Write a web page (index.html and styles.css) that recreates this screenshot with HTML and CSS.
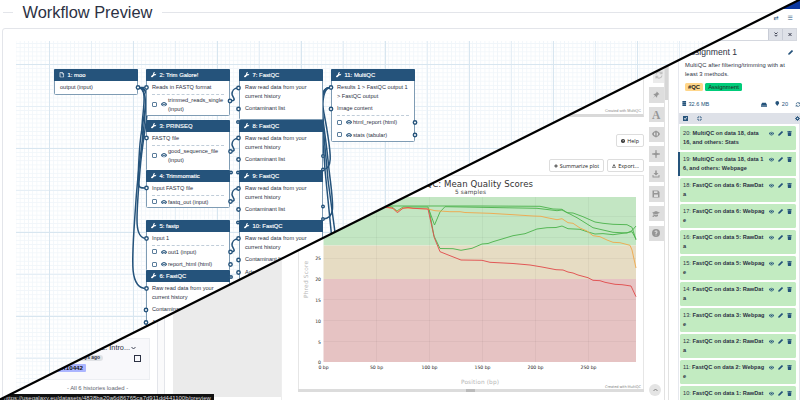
FILE: index.html
```html
<!DOCTYPE html>
<html lang="en">
<head>
    <meta charset="UTF-8">
    <meta name="viewport" content="width=device-width, initial-scale=1.0">
    <title>Workflow Preview</title>
    <link rel="stylesheet" href="styles.css">
</head>
<body>
    <!-- Icon set -->
    <svg class="icon-defs" width="0" height="0">
        <symbol id="wrench" viewBox="0 0 16 16"><path d="M15.5 4.2 12.8 6.6 10 6 9.4 3.2 11.9.5A4.6 4.6 0 0 0 6.3 6.2L.8 11.7a2 2 0 0 0 0 2.9l.6.6a2 2 0 0 0 2.9 0L9.8 9.7A4.6 4.6 0 0 0 15.5 4.2z"/></symbol>
        <symbol id="file" viewBox="0 0 16 16"><path d="M3 1h6.5L13.5 5v10H3zM9 1v4.5h4.5" fill="none" stroke="currentColor" stroke-width="2"/></symbol>
        <symbol id="eye" viewBox="0 0 16 12"><path fill-rule="evenodd" d="M8 0C4.5 0 1.5 2.5 0 6c1.5 3.5 4.5 6 8 6s6.5-2.5 8-6c-1.5-3.5-4.5-6-8-6zm0 2a4 4 0 1 1 0 8 4 4 0 0 1 0-8z"/><circle cx="8" cy="6" r="2.3"/></symbol>
        <symbol id="pen" viewBox="0 0 16 16"><path d="M11.5.8a1.5 1.5 0 0 1 2.1 0l1.6 1.6a1.5 1.5 0 0 1 0 2.1L5.5 14.2.5 15.5l1.3-5z"/></symbol>
        <symbol id="trash" viewBox="0 0 14 16"><path d="M0 1h4l1-1h4l1 1h4v2H0zM1 4h12l-1 12H2z"/></symbol>
        <symbol id="database" viewBox="0 0 14 16"><path d="M1 0h12v4H1zM1 5h12v5H1zM1 11h12v5H1z"/></symbol>
        <symbol id="pin" viewBox="0 0 16 16"><path d="M9.5 1 15 6.5 13 7l-2.5 2.5-.5 4L6.5 10 1 15l5-5.5L2.5 6l4-.5L9 3z"/></symbol>
        <symbol id="hide" viewBox="0 0 16 16"><path fill-rule="evenodd" d="M8 2C4 2 1 5 0 8c1 3 4 6 8 6s7-3 8-6c-1-3-4-6-8-6zM4 5.5 7 5v6.5L4 10zM9 4.5l3 1.5v4.5L9 12z"/><path d="M7.2 1h1.6v14H7.2z"/></symbol>
        <symbol id="plus" viewBox="0 0 16 16"><path d="M7 0h2l.5 6L16 7v2l-6.5.8L9 16H7l-.5-6.2L0 9V7l6.5-1z"/></symbol>
        <symbol id="download" viewBox="0 0 16 16"><path d="M6.5 1h3v5H13l-5 5-5-5h3.5zM1 10h2v3h10v-3h2v5H1z"/></symbol>
        <symbol id="save" viewBox="0 0 16 16"><path fill-rule="evenodd" d="M1 1h11l3 3v11H1zM4 2.5V6h7V2.5zM4 9v5h8V9z"/></symbol>
        <symbol id="cap" viewBox="0 0 16 16"><path d="M8 2l8 3.5L8 9 3 6.8V10l1 4H1l1-4V6.3L0 5.5zM4 8.5l4 1.8 4-1.8V12c-2 2-6 2-8 0z"/></symbol>
        <symbol id="help" viewBox="0 0 16 16"><path fill-rule="evenodd" d="M8 0a8 8 0 1 0 0 16A8 8 0 0 0 8 0zM5 6a3 3 0 1 1 4.2 2.8V10H7V7.5c1 0 2-.5 2-1.5 0-1.3-2-1.3-2 0zm2 5h2v2H7z"/></symbol>
        <symbol id="refresh" viewBox="0 0 16 16"><path d="M2 7a6 6 0 0 1 11-2.5M14 9a6 6 0 0 1-11 2.5M14 1v4.5H9.5M2 15v-4.5h4.5" fill="none" stroke="currentColor" stroke-width="2.2"/></symbol>
        <symbol id="gear" viewBox="0 0 16 16"><circle cx="8" cy="8" r="4.2" fill="none" stroke="currentColor" stroke-width="3.5"/><path d="M8 0v3M8 13v3M0 8h3M13 8h3M2.5 2.5l2 2M11.5 11.5l2 2M13.5 2.5l-2 2M4.5 11.5l-2 2" stroke="currentColor" stroke-width="2.5"/></symbol>
    </svg>

    <main class="stage">
        <!-- Galaxy window -->
        <div class="galaxy">
            <aside class="histories">
                <div class="history-card">
                    <div class="card-title">Assignment 2: Intro...<svg class="chevron" viewBox="0 0 10 6"><path d="M1 1l4 4 4-4"/></svg></div>
                    <div class="card-row"><span class="ago">6 days ago</span><span class="pick"></span></div>
                    <span class="purple-tag">SRR10442</span>
                </div>
                <p class="loaded">- All 6 histories loaded -</p>
            </aside>
            <div class="gutter"></div>

            <section class="report">
                <div class="prev-plot"><span>Created with MultiQC</span></div>
                <div class="report-buttons"><span class="btn"><svg><use href="#help"/></svg>Help</span></div>
                <div class="report-buttons second">
                    <span class="btn"><svg><use href="#plus"/></svg>Summarize plot</span>
                    <span class="btn export"><svg><use href="#download"/></svg>Export...</span>
                </div>
                <div class="plot">
                    <svg width="344" height="213" viewBox="299 176 344 213">
                        <text class="plot-title" x="408" y="186.5" textLength="125">FastQC: Mean Quality Scores</text>
                        <text class="plot-sub" x="455" y="194.3" textLength="31">5 samples</text>
                        <rect x="323.5" y="197" width="312.5" height="48.5" fill="#c3e6c3"/>
                        <rect x="323.5" y="245.5" width="312.5" height="33.5" fill="#e6dcc3"/>
                        <rect x="323.5" y="279" width="312.5" height="83" fill="#e6c3c3"/>
                        <path class="plot-grid" d="M376.5 197v165M429.5 197v165M482.5 197v165M535.5 197v165M588.5 197v165M323.5 216.5h312.5M323.5 237.5h312.5M323.5 258.5h312.5M323.5 299.5h312.5M323.5 320.5h312.5M323.5 341.5h312.5"/>
                        <g class="axis-y">
                            <text x="321" y="260">25</text><text x="321" y="281">20</text><text x="321" y="301.5">15</text>
                            <text x="321" y="322.5">10</text><text x="321" y="343.5">5</text><text x="321" y="364">0</text>
                        </g>
                        <g class="axis-x">
                            <text x="323.5" y="369">0 bp</text><text x="376.5" y="369">50 bp</text><text x="429.5" y="369">100 bp</text>
                            <text x="482.5" y="369">150 bp</text><text x="535.5" y="369">200 bp</text><text x="588.5" y="369">250 bp</text>
                        </g>
                        <text class="axis-title" transform="translate(307.5 298) rotate(-90)" textLength="37">Phred Score</text>
                        <text class="axis-title" x="461" y="384" textLength="38">Position (bp)</text>
                        <text class="credit" x="605" y="387.8" textLength="36">Created with MultiQC</text>
                        <g class="curves">
                            <path class="good" d="M370 206.5 392 207 397 211 403 207 428 207 434.5 225 440 212 445 206.7 480 207.3 537 208.3 557 210.7 562 210 568 213 577 217.7 593 227.7 603 230 613 232.3 627 233 632 230.7 636 226"/>
                            <path class="good" d="M370 206 420 206 480 206 540 206.3 553 209 562 209.3 567 212.7 573 213 583 216.7 595 222 603 223.3 613 224.3 627 224.7 632 227.3 636 240"/>
                            <path class="good" d="M429 209 434 236 440 248.5 453 248.7 461 250.3 472 248.3 482 244 488 243.5 493 241.7 513 235.7 525 233.7 537 229 547 227.7 556 227.5 562 226 568 228.7 580 229.3 587 231.7 595 234 603 233.6 613 234.7 627 232.7 632 231.7 636 239"/>
                            <path class="warn" d="M370 206.5 392 208 397 211.5 403 208 428 209 435 210.7 450 211.7 460 211.7 465 212.5 490 213.3 513 214.7 533 216 541 216.3 547 217.7 557 219.7 562 218.7 568 222.7 573 223.3 580 228 587 231 593 235.7 600 236.7 607 240 613 242.3 620 242.7 630 245.3 632 250 636 268"/>
                            <path class="bad" d="M370 206 387 207.3 393 208.3 397.3 212.7 403 208.3 408 207.5 413 208.3 428 209 434.3 237.7 440 251.7 450 255.7 461 260 482 260.3 490 262.3 513 263.5 530 265 542 267 556 269.7 563 270 568 272 573 273 578 275 588 277.7 593 280.3 600 280.7 605 282.3 615 284.3 622 284.7 631 286 636 296.7"/>
                        </g>
                    </svg>
                </div>
                <div class="hscroll"><i></i></div>
            </section>

            <nav class="plot-tools">
                <span class="tool faded"><svg><use href="#refresh"/></svg></span>
                <span class="tool"><svg><use href="#pin"/></svg></span>
                <span class="tool letter">A</span>
                <span class="tool"><svg><use href="#hide"/></svg></span>
                <span class="tool"><svg><use href="#plus"/></svg></span>
                <span class="tool"><svg><use href="#download"/></svg></span>
                <span class="tool"><svg><use href="#save"/></svg></span>
                <span class="tool"><svg><use href="#cap"/></svg></span>
                <span class="tool"><svg><use href="#help"/></svg></span>
                <span class="to-top"><svg class="chevron" viewBox="0 0 10 6"><path d="M1 5l4-4 4 4"/></svg></span>
            </nav>
            <div class="vscroll"><i></i></div>

            <aside class="history">
                <div class="masthead"></div>
                <div class="history-top"><span>&#8644;</span><span>&#9776;</span></div>
                <div class="history-search">
                    <span><svg viewBox="0 0 8 10"><path d="M1 1l3 3 3-3M1 5.5l3 3 3-3"/></svg></span>
                    <span><svg viewBox="0 0 8 10"><path d="M1 2l6 6M7 2L1 8"/></svg></span>
                </div>
                <div class="history-info">
                    <div class="history-name"><h2>Assignment 1</h2><svg><use href="#pen"/></svg></div>
                    <p>MultiQC after filtering/trimming with at<br>least 3 methods.</p>
                    <div class="tags"><span class="tag-qc">#QC</span><span class="tag-assign">Assignment</span></div>
                    <div class="stats">
                        <span class="size"><svg><use href="#database"/></svg>32.6 MB</span>
                        <svg class="disk" viewBox="0 0 16 12"><path d="M3 1h10l3 6H0zM0 8h16v4H0z"/></svg>
                        <span class="count"><svg viewBox="0 0 12 16"><path d="M6 0a6 6 0 0 1 6 6c0 3-3 5-6 10C3 11 0 9 0 6a6 6 0 0 1 6-6z"/></svg>20</span>
                        <svg class="sync"><use href="#refresh"/></svg>
                    </div>
                </div>
                <div class="select-bar">
                    <svg viewBox="0 0 12 12"><path fill-rule="evenodd" d="M0 0h12v12H0zM2 6l3 3.5 5-6-1.5-1L5 6.5 3.5 5z"/></svg>
                    <svg viewBox="0 0 12 12"><path d="M4 0v4H0M8 0v4h4M4 12V8H0M8 12V8h4" fill="none" stroke="currentColor" stroke-width="1.5"/></svg>
                    <svg class="settings"><use href="#gear"/></svg>
                </div>
                <div class="datasets">
                    <div class="dataset"><p><span>20:</span> MultiQC on data 18, data<br>16, and others: Stats</p><div class="acts"><svg><use href="#eye"/></svg><svg><use href="#pen"/></svg><svg><use href="#trash"/></svg></div></div>
                    <div class="dataset active"><p><span>19:</span> MultiQC on data 18, data 1<br>6, and others: Webpage</p><div class="acts"><svg><use href="#eye"/></svg><svg><use href="#pen"/></svg><svg><use href="#trash"/></svg></div></div>
                    <div class="dataset"><p><span>18:</span> FastQC on data 6: RawDat<br>a</p><div class="acts"><svg><use href="#eye"/></svg><svg><use href="#pen"/></svg><svg><use href="#trash"/></svg></div></div>
                    <div class="dataset"><p><span>17:</span> FastQC on data 6: Webpag<br>e</p><div class="acts"><svg><use href="#eye"/></svg><svg><use href="#pen"/></svg><svg><use href="#trash"/></svg></div></div>
                    <div class="dataset"><p><span>16:</span> FastQC on data 5: RawDat<br>a</p><div class="acts"><svg><use href="#eye"/></svg><svg><use href="#pen"/></svg><svg><use href="#trash"/></svg></div></div>
                    <div class="dataset"><p><span>15:</span> FastQC on data 5: Webpag<br>e</p><div class="acts"><svg><use href="#eye"/></svg><svg><use href="#pen"/></svg><svg><use href="#trash"/></svg></div></div>
                    <div class="dataset"><p><span>14:</span> FastQC on data 3: RawDat<br>a</p><div class="acts"><svg><use href="#eye"/></svg><svg><use href="#pen"/></svg><svg><use href="#trash"/></svg></div></div>
                    <div class="dataset"><p><span>13:</span> FastQC on data 3: Webpag<br>e</p><div class="acts"><svg><use href="#eye"/></svg><svg><use href="#pen"/></svg><svg><use href="#trash"/></svg></div></div>
                    <div class="dataset"><p><span>12:</span> FastQC on data 2: RawDat<br>a</p><div class="acts"><svg><use href="#eye"/></svg><svg><use href="#pen"/></svg><svg><use href="#trash"/></svg></div></div>
                    <div class="dataset"><p><span>11:</span> FastQC on data 2: Webpag<br>e</p><div class="acts"><svg><use href="#eye"/></svg><svg><use href="#pen"/></svg><svg><use href="#trash"/></svg></div></div>
                    <div class="dataset"><p><span>10:</span> FastQC on data 1: RawDat</p><div class="acts"><svg><use href="#eye"/></svg><svg><use href="#pen"/></svg><svg><use href="#trash"/></svg></div></div>
                </div>
            </aside>
            <div class="status-url">https://usegalaxy.eu/datasets/4838ba20a6d86765ca7d911dd441100b/preview</div>
        </div>

        <!-- Workflow window, cut along the diagonal -->
        <section class="workflow">
            <h1>Workflow Preview</h1>
            <div class="canvas-card">
                <div class="canvas">
                    <svg class="wires" viewBox="0 0 800 400">
                        <path d="M138 87.5h8.5"/>
                        <path d="M138 87.5C153 87 134 138 146.5 138"/>
                        <path d="M138 87.5C155 88 142 110 139.5 150S137 188 146.5 188"/>
                        <path d="M138 87.5C157 88 144 120 140 170S134 238.5 146.5 238.5"/>
                        <path d="M138 87.5C154 88 140 140 136 200S128 288.5 146.5 288.5"/>
                        <path d="M230 101c8 0 2-4 2-7s2-6 6-6M230 151.5c8 0 2-4 2-7s2-6 6-6M230 201.5c8 0 2-4 2-7s2-6 6-6M230 252c8 0 2-4 2-7s2-6 6-6"/>
                        <path d="M331 87.5C316 87 324 110 327 130S334 169.5 323 169.5"/>
                        <path d="M331 87.5C315 87 324 120 328 160S338 219 323 219"/>
                        <path d="M331 87.5C315 87 322 120 325 170L332 240M331 87.5C316 87 325 140 328 180L336 240"/>
                    </svg>

                    <div class="node n1"><h3><svg><use href="#file"/></svg>1: moo</h3><p>output (input)</p></div>
                    <div class="node n2"><h3><svg><use href="#wrench"/></svg>2: Trim Galore!</h3><p>Reads in FASTQ format</p><hr><div class="out tall"><i></i><svg><use href="#eye"/></svg><span>trimmed_reads_single<br>(input)</span></div></div>
                    <div class="node n3"><h3><svg><use href="#wrench"/></svg>3: PRINSEQ</h3><p>FASTQ file</p><hr><div class="out tall"><i></i><svg><use href="#eye"/></svg><span>good_sequence_file<br>(input)</span></div></div>
                    <div class="node n4"><h3><svg><use href="#wrench"/></svg>4: Trimmomatic</h3><p>Input FASTQ file</p><hr><div class="out"><i></i><svg><use href="#eye"/></svg><span>fastq_out (input)</span></div></div>
                    <div class="node n5"><h3><svg><use href="#wrench"/></svg>5: fastp</h3><p>Input 1</p><hr><div class="out"><i></i><svg><use href="#eye"/></svg><span>out1 (input)</span></div><div class="out"><i></i><svg><use href="#eye"/></svg><span>report_html (html)</span></div></div>
                    <div class="node n6"><h3><svg><use href="#wrench"/></svg>6: FastQC</h3><p>Raw read data from your<br>current history</p><p>Contaminant list</p><p>Adapter list</p></div>
                    <div class="node n7"><h3><svg><use href="#wrench"/></svg>7: FastQC</h3><p>Raw read data from your<br>current history</p><p>Contaminant list</p></div>
                    <div class="node n8"><h3><svg><use href="#wrench"/></svg>8: FastQC</h3><p>Raw read data from your<br>current history</p><p>Contaminant list</p></div>
                    <div class="node n9"><h3><svg><use href="#wrench"/></svg>9: FastQC</h3><p>Raw read data from your<br>current history</p><p>Contaminant list</p></div>
                    <div class="node n10"><h3><svg><use href="#wrench"/></svg>10: FastQC</h3><p>Raw read data from your<br>current history</p><p>Contaminant list</p><p>Adapter list</p></div>
                    <div class="node n11"><h3><svg><use href="#wrench"/></svg>11: MultiQC</h3><p>Results 1 &gt; FastQC output 1<br>&gt; FastQC output</p><p>Image content</p><hr><div class="out"><i></i><svg><use href="#eye"/></svg><span>html_report (html)</span></div><div class="out"><i></i><svg><use href="#eye"/></svg><span>stats (tabular)</span></div></div>

                    <!-- Node terminals -->
                    <svg class="terminals" viewBox="0 0 800 400">
                        <circle cx="138" cy="87.5" r="1.7"/>
                        <circle cx="146.5" cy="87.5" r="1.7"/><circle cx="230" cy="101" r="1.7"/>
                        <circle cx="146.5" cy="138" r="1.7"/><circle cx="230.5" cy="151.5" r="1.7"/>
                        <circle cx="146.5" cy="188" r="1.7"/><circle cx="230.5" cy="201.5" r="1.7"/>
                        <circle cx="231" cy="172.5" r="1.3"/>
                        <circle cx="146.5" cy="238.5" r="1.7"/><circle cx="230.5" cy="252" r="1.7"/><circle cx="230.5" cy="264.5" r="1.7"/><circle cx="231" cy="277" r="1.3"/>
                        <circle cx="146.5" cy="288.5" r="1.7"/><circle cx="146" cy="310" r="1.7"/><circle cx="146" cy="322.5" r="1.7"/>
                        <circle cx="238.5" cy="88" r="1.7"/><circle cx="238.5" cy="109" r="1.7"/><circle cx="238" cy="122" r="1.3"/>
                        <circle cx="238.5" cy="138" r="1.7"/><circle cx="238.5" cy="159.5" r="1.7"/><circle cx="238" cy="172.5" r="1.3"/>
                        <circle cx="238.5" cy="188.5" r="1.7"/><circle cx="238.5" cy="209.5" r="1.7"/><circle cx="238" cy="222.5" r="1.3"/>
                        <circle cx="238.5" cy="238.5" r="1.7"/><circle cx="238.5" cy="260" r="1.7"/><circle cx="238.5" cy="272.5" r="1.7"/>
                        <circle cx="323" cy="156" r="1.3"/><circle cx="323" cy="169.5" r="1.3"/><circle cx="323" cy="206.5" r="1.3"/><circle cx="323" cy="219" r="1.3"/>
                        <circle cx="331" cy="87.5" r="1.7"/><circle cx="331" cy="109" r="1.7"/><circle cx="415" cy="122.5" r="1.7"/><circle cx="415" cy="135" r="1.7"/>
                    </svg>
                </div>
            </div>
        </section>

        <svg class="divider" viewBox="0 0 800 400"><path d="M-2 400.5 802-1.5"/></svg>
    </main>
</body>
</html>
```
FILE: styles.css
```css
* {
    box-sizing: border-box;
}

body {
    margin: 0;
    font-family: "Liberation Sans", Arial, sans-serif;
    font-size: 5.6px;
    color: #2c3143;
    background: #fff;
    overflow: hidden;
}

h1, h2, h3, p {
    margin: 0;
    font-weight: normal;
}

svg {
    fill: currentColor;
    flex: none;
}

.icon-defs {
    position: absolute;
}

.stage {
    position: relative;
    width: 800px;
    height: 400px;
    overflow: hidden;
}

/* Galaxy window */
.galaxy {
    display: flex;
    width: 800px;
    height: 400px;
    background: #fff;
}

.histories {
    width: 158px;
    padding: 338px 7px 0 38px;
    border-right: 1px solid #e3e5ea;
}

.history-card {
    height: 42px;
    padding: 5px 9px 0 0;
    background: #f8f8fb;
    border: 1px solid #eceef2;
}

.card-title {
    margin-right: 4px;
    font-size: 7.3px;
    line-height: 8px;
    text-align: right;
    white-space: nowrap;
}

.chevron {
    width: 5px;
    height: 4px;
    margin-left: 1px;
    fill: none;
    stroke: currentColor;
    stroke-width: 1.8;
}

.card-row {
    display: flex;
    justify-content: flex-end;
    align-items: center;
    gap: 31px;
    height: 12px;
    margin-right: -1px;
}

.ago {
    padding: 0 3px;
    border-radius: 3px;
    background: #dfe1e5;
    font-size: 4.9px;
    font-weight: bold;
    line-height: 6.5px;
}

.pick {
    width: 7px;
    height: 7px;
    border: 1px solid #2c3143;
}

.purple-tag {
    display: block;
    width: 34px;
    margin-left: 13px;
    padding-right: 3px;
    background: #abb5ff;
    color: #111;
    border-radius: 1px;
    font-size: 6.2px;
    font-weight: bold;
    line-height: 8px;
    text-align: right;
}

.loaded {
    padding: 5px 0 0 7px;
    color: #60646f;
    font-size: 5.9px;
    text-align: center;
    white-space: nowrap;
}

.gutter {
    width: 123px;
    height: 397px;
    background: linear-gradient(to right, #fafafb 6px, #e3e5ea 6px, #e3e5ea 7px, #fff 7px, #fff 15px, #ebebeb 15px);
}

.report {
    display: flex;
    flex-direction: column;
    width: 363px;
    padding-left: 16px;
    border-left: 1px solid #eee;
}

.prev-plot {
    display: flex;
    justify-content: flex-end;
    align-items: flex-end;
    height: 117px;
    padding: 0 2px 1px 0;
    border-right: 1px solid #e4e4e4;
    border-bottom: 3px solid #d9d9d9;
    color: #888;
    font-size: 3.8px;
}

.report-buttons {
    display: flex;
    justify-content: flex-end;
    gap: 3px;
    margin-top: 17px;
}

.report-buttons.second {
    margin-top: 12px;
}

.btn {
    display: flex;
    align-items: center;
    gap: 2px;
    height: 13px;
    padding: 0 4px;
    border: 1px solid #ddd;
    border-radius: 2px;
    color: #222;
    font-family: "Open Sans", sans-serif;
    font-size: 5.4px;
}

.btn svg {
    width: 4px;
    height: 4px;
}

.plot {
    height: 214px;
    margin-top: 3px;
    border: 1px solid #e6e6e6;
    border-bottom: none;
}

.plot svg {
    display: block;
    font-family: "DejaVu Sans", sans-serif;
}

.plot-title {
    font-size: 8.6px;
    fill: #333;
}

.plot-sub {
    font-size: 5.8px;
    fill: #444;
}

.plot-grid {
    stroke: #000;
    stroke-opacity: .06;
    stroke-width: .7;
    fill: none;
}

.axis-y text,
.axis-x text {
    font-size: 4.6px;
    fill: #222;
    text-anchor: middle;
}

.axis-y text {
    text-anchor: end;
}

.axis-title {
    font-size: 5.8px;
    fill: #b5b5b5;
}

.credit {
    font-size: 3.6px;
    fill: #888;
}

.curves path {
    fill: none;
    stroke-width: .95;
    stroke-linejoin: round;
}

.curves .good {
    stroke: #50b450;
}

.curves .warn {
    stroke: #eeaa50;
}

.curves .bad {
    stroke: #e05050;
}

.hscroll {
    height: 3px;
    background: #dcdcdc;
}

.hscroll i {
    display: block;
    width: 9px;
    height: 3px;
    margin-left: 168px;
    background: #bbb;
}

.plot-tools {
    display: flex;
    flex-direction: column;
    align-items: flex-end;
    gap: 4.3px;
    width: 20px;
    padding-top: 67.3px;
}

.tool {
    display: flex;
    flex: none;
    align-items: center;
    justify-content: center;
    width: 15.5px;
    height: 15.5px;
    background: #dedede;
    color: #969696;
}

.tool svg {
    width: 8px;
    height: 8px;
}

.tool.faded {
    width: 11px;
    opacity: .6;
}

.tool.letter {
    font-family: "Liberation Serif", serif;
    font-size: 11.5px;
    font-weight: bold;
}

.to-top {
    display: flex;
    align-items: center;
    justify-content: center;
    width: 12px;
    height: 12px;
    margin: 139px 3px 0 0;
    border-radius: 50%;
    background: #e4e4e4;
}

.to-top .chevron {
    margin: 0;
    color: #777;
}

.vscroll {
    width: 4.5px;
    border: solid #e2e2e2;
    border-width: 0 1px;
}

.vscroll i {
    display: block;
    height: 100px;
    background: #d6d6d6;
}

/* History panel */
.history {
    display: flex;
    flex-direction: column;
    flex: 1;
    min-width: 0;
    margin-left: 9.5px;
    border-left: 1px solid #e6e8ee;
}

.history > div {
    flex: none;
}

.masthead {
    height: 9px;
    background: #0b37a0;
}

.history-top {
    display: flex;
    justify-content: flex-end;
    gap: 9px;
    height: 19px;
    padding: 5px 7px 0 0;
    color: #25537b;
    font-family: "DejaVu Sans", sans-serif;
    font-size: 6px;
    line-height: 8px;
}

.history-search {
    display: flex;
    justify-content: flex-end;
    height: 13px;
    margin-right: 3px;
    border: 1px solid #d5d8df;
}

.history-search span {
    display: flex;
    align-items: center;
    justify-content: center;
    width: 14px;
    background: #dee1e8;
    border-left: 1px solid #c8ccd6;
}

.history-search svg {
    width: 4px;
    height: 5px;
    fill: none;
    stroke: #2c3143;
    stroke-width: 1.8;
}

.history-info {
    height: 71.5px;
    padding: 6px 0 0 6px;
}

.history-name {
    display: flex;
    justify-content: space-between;
    align-items: center;
    padding-right: 7px;
    color: #25537b;
}

.history-name h2 {
    color: #2c3143;
    font-size: 8.6px;
    line-height: 11px;
}

.history-name svg {
    width: 5px;
    height: 5px;
}

.history-info p {
    margin-top: 3px;
    font-size: 5.8px;
    line-height: 8.7px;
    letter-spacing: .08px;
    white-space: nowrap;
}

.tags {
    display: flex;
    gap: 2px;
    margin-top: 5px;
    font-size: 5.9px;
    line-height: 8px;
}

.tags span {
    padding: 0 3px;
    border-radius: 1.5px;
    color: #222;
}

.tags .tag-qc {
    background: #ffd68a;
    font-weight: bold;
}

.tags .tag-assign {
    background: #00cc7a;
}

.stats {
    display: flex;
    align-items: center;
    margin: 10px 0 0 -3px;
    color: #25537b;
    line-height: 6px;
}

.stats svg {
    width: 4.5px;
    height: 5px;
}

.stats .size,
.stats .count {
    display: flex;
    gap: 2px;
}

.stats .disk {
    width: 6px;
    margin: 0 8px 0 auto;
}

.stats .sync {
    width: 6px;
    margin: 0 -1px 0 7px;
}

.select-bar {
    display: flex;
    align-items: center;
    gap: 9px;
    height: 11.5px;
    padding-left: 4px;
    background: #dee1e8;
    color: #25537b;
}

.select-bar svg {
    width: 5px;
    height: 5px;
}

.select-bar .settings {
    margin: 0 0 0 auto;
}

.datasets {
    display: flex;
    flex-direction: column;
    gap: 2px;
    height: 276px;
    padding: 2px 3px 0 1px;
    border-right: 1px solid #e3e5ea;
}

.dataset {
    display: flex;
    flex: none;
    justify-content: space-between;
    height: 24px;
    padding: 3px 4px 0 3px;
    border-radius: 1.5px;
    background: #c2ebc1;
}

.dataset.active {
    margin-left: -2px;
    border-left: 2px solid #25537b;
    border-radius: 0;
}

.dataset p {
    font-size: 5.6px;
    font-weight: bold;
    letter-spacing: .04px;
    line-height: 8.7px;
    white-space: nowrap;
}

.dataset p span {
    font-weight: normal;
}

.acts {
    display: flex;
    gap: 4px;
    padding-top: 2px;
    color: #25537b;
}

.acts svg {
    width: 5px;
    height: 5px;
}

.status-url {
    position: absolute;
    left: 0;
    bottom: 0;
    width: 214px;
    height: 6px;
    padding-left: 4px;
    overflow: hidden;
    background: #111;
    color: #ddd;
    font-size: 6px;
    line-height: 9px;
    white-space: nowrap;
}

/* Workflow window */
.workflow {
    position: absolute;
    inset: 0;
    background: #fff;
    clip-path: polygon(0 0, 100% 0, 0 100%);
}

.workflow h1 {
    display: flex;
    align-items: center;
    gap: 10px;
    height: 25px;
    font-size: 16.4px;
    line-height: 25px;
    white-space: nowrap;
}

.workflow h1::before,
.workflow h1::after {
    content: "";
    width: 10px;
    height: 1px;
    margin-left: 2.5px;
    background: #e3e5ea;
}

.workflow h1::after {
    flex: 1;
    margin-left: 0;
}

.canvas-card {
    height: 380px;
    margin: 3px 2px 0;
    padding: 12px 13px;
    border: 1px solid #e3e5ea;
    border-radius: 3px;
}

.canvas {
    height: 355px;
    background-image:
        linear-gradient(to right, #d8e6f0 1px, transparent 1px),
        linear-gradient(to bottom, #d8e6f0 1px, transparent 1px),
        linear-gradient(to right, #e6eff6 1px, transparent 1px),
        linear-gradient(to bottom, #e6eff6 1px, transparent 1px),
        linear-gradient(to right, #f1f6fa .6px, transparent .6px),
        linear-gradient(to bottom, #f1f6fa .6px, transparent .6px);
    background-size: 84px 84px, 84px 84px, 42px 42px, 42px 42px, 4.2px 4.2px, 4.2px 4.2px;
    background-position: 33px 23px;
}

.wires,
.terminals {
    position: absolute;
    left: 0;
    top: 0;
    width: 800px;
    height: 400px;
}

.wires path {
    fill: none;
    stroke: #25537b;
    stroke-width: 1.5;
}

.terminals circle {
    fill: #fff;
    stroke: #25537b;
    stroke-width: 1.4;
}

.node {
    position: absolute;
    width: 84px;
    background: #fff;
    border: 1px solid #7f9cb4;
    border-radius: 1.5px;
    white-space: nowrap;
}

.node h3 {
    display: flex;
    align-items: center;
    gap: 3px;
    height: 12px;
    margin: -1px -1px 0;
    padding-left: 5px;
    border-radius: 1px 1px 0 0;
    background: #25537b;
    color: #fff;
    font-size: 5.9px;
    -webkit-text-stroke: .15px #fff;
}

.node h3 svg {
    width: 5.5px;
    height: 5.5px;
}

.node p {
    padding: 2px 0 2px 5px;
    line-height: 8.7px;
}

.node hr {
    margin: 0 5px;
    border: none;
    border-top: 1px dashed #c0cdd9;
}

.out {
    display: flex;
    align-items: center;
    height: 12.5px;
    padding-left: 5px;
    line-height: 8.4px;
}

.out.tall {
    height: 20px;
}

.out i {
    width: 5px;
    height: 5px;
    margin-right: 4px;
    border: 1px solid #5b7d9b;
    border-radius: 1px;
}

.out svg {
    width: 6px;
    height: 4.5px;
    margin-right: 1px;
    color: #25537b;
}

.n1 { left: 54px; top: 69px; height: 26px; }
.n2 { left: 146px; top: 69px; height: 47px; }
.n3 { left: 146px; top: 120px; height: 51px; }
.n4 { left: 146px; top: 170px; height: 38px; }
.n5 { left: 146px; top: 220px; height: 51px; }
.n6 { left: 146px; top: 270px; height: 80px; }
.n7 { left: 239px; top: 69px; height: 51px; }
.n8 { left: 239px; top: 120px; height: 51px; }
.n9 { left: 239px; top: 170px; height: 51px; }
.n10 { left: 239px; top: 220px; height: 80px; }
.n11 { left: 331px; top: 69px; height: 73px; }

/* Diagonal cut */
.divider {
    position: absolute;
    inset: 0;
    width: 800px;
    height: 400px;
    fill: none;
    stroke: #000;
    stroke-width: 2.2;
}
```
